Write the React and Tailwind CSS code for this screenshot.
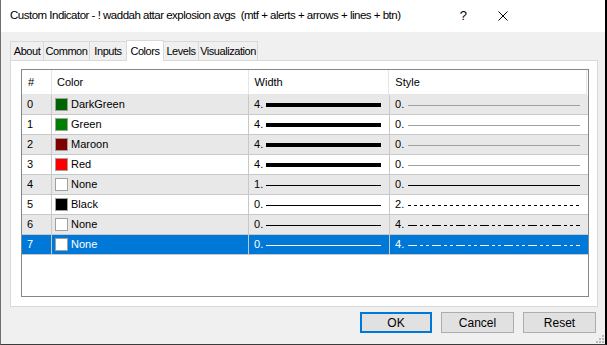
import React from 'react'

const rows = [
  { n: 0, color: '#006400', name: 'DarkGreen', w: 4, s: 0 },
  { n: 1, color: '#008000', name: 'Green', w: 4, s: 0 },
  { n: 2, color: '#800000', name: 'Maroon', w: 4, s: 0 },
  { n: 3, color: '#ff0000', name: 'Red', w: 4, s: 0 },
  { n: 4, color: '#ffffff', name: 'None', w: 1, s: 0 },
  { n: 5, color: '#000000', name: 'Black', w: 0, s: 2 },
  { n: 6, color: '#ffffff', name: 'None', w: 0, s: 4 },
  { n: 7, color: '#ffffff', name: 'None', w: 0, s: 4 },
]

const tabs = [
  { label: 'About', w: 'w-[34px]' },
  { label: 'Common', w: 'w-[46px]' },
  { label: 'Inputs', w: 'w-[36px]' },
  { label: 'Colors', w: 'w-[38px]', active: true },
  { label: 'Levels', w: 'w-[35px]' },
  { label: 'Visualization', w: 'w-[59px]' },
]

function WidthLine({ w, stroke }) {
  const thick = w === 4
  return (
    <svg width="116" height="6" className="block">
      <line x1="0" y1={thick ? 3 : 3.5} x2="115" y2={thick ? 3 : 3.5} stroke={stroke} strokeWidth={thick ? 4 : 1} />
    </svg>
  )
}

function StyleLine({ s, stroke }) {
  const dash = s === 2 ? '3 3' : s === 4 ? '9 3 3 3 3 3' : undefined
  return (
    <svg width="173" height="6" className="block">
      <line x1="0" y1="3.5" x2="172" y2="3.5" stroke={stroke} strokeWidth="1" strokeDasharray={dash} />
    </svg>
  )
}

export default function App() {
  return (
    <div
      className="w-[607px] h-[345px] bg-[#f0f0f0] border-l border-l-[#6e6e6e] border-r-2 border-r-black border-b border-b-[#3c3c3c] flex flex-col text-black overflow-hidden"
      style={{ fontFamily: '"Liberation Sans", Arial, sans-serif' }}
    >
      {/* Title bar */}
      <div className="h-[32px] bg-white flex items-center pl-[9px] text-[11.5px] tracking-[-0.5px] shrink-0">
        <span className="whitespace-pre shrink-0">Custom Indicator - ! waddah attar explosion avgs  (mtf + alerts + arrows + lines + btn)</span>
        <div className="flex-1" />
        <div className="w-[40px] text-center text-[13px] shrink-0">?</div>
        <div className="w-[40px] flex justify-center shrink-0">
          <svg width="10" height="10" className="block">
            <path d="M0.5 0.5 L9.5 9.5 M9.5 0.5 L0.5 9.5" stroke="#000" strokeWidth="1" />
          </svg>
        </div>
        <div className="w-[82px] shrink-0" />
      </div>

      {/* Tabs */}
      <div className="pl-[9px] pt-[7px] flex items-end h-[28px] shrink-0 text-[11px] tracking-[-0.45px]">
        {tabs.map((t, i) =>
          t.active ? (
            <div
              key={t.label}
              className={`${t.w} h-[21px] bg-white border-t border-x border-[#d9d9d9] flex items-start justify-center pt-[2px] -mb-px relative z-10 whitespace-nowrap`}
            >
              {t.label}
            </div>
          ) : (
            <div
              key={t.label}
              className={`${t.w} h-[19px] bg-[#f0f0f0] border-t border-[#d9d9d9] ${i === 0 ? 'border-l' : ''} ${tabs[i + 1] && !tabs[i + 1].active ? 'border-r' : ''} ${i === tabs.length - 1 ? 'border-r' : ''} flex items-center justify-center whitespace-nowrap`}
            >
              {t.label}
            </div>
          )
        )}
      </div>

      {/* Panel */}
      <div className="ml-[9px] mr-[7px] h-[247px] bg-white border border-[#d9d9d9] pl-[10px] pr-[8px] pt-[8px] pb-[9px] shrink-0">
        <div className="h-full border border-[#828790] bg-white text-[11px] pr-px">
          {/* Header */}
          <div className="flex h-[25px] border-b border-[#e5e5e5]">
            <div className="w-[30px] border-r border-[#e5e5e5] flex items-center pl-[6px]">#</div>
            <div className="w-[197px] border-r border-[#e5e5e5] flex items-center pl-[5px]">Color</div>
            <div className="w-[141px] border-r border-[#e5e5e5] flex items-center pl-[6px]">Width</div>
            <div className="w-[198px] border-r border-[#e5e5e5] flex items-center pl-[6px]">Style</div>
          </div>
          {rows.map((r) => {
            const sel = r.n === 7
            const bg = sel ? 'bg-[#0078d7] text-white' : r.n % 2 === 0 ? 'bg-[#e8e8e8]' : 'bg-white'
            const stroke = sel ? '#ffffff' : '#000000'
            const styleStroke = sel ? '#ffffff' : r.w === 4 ? '#a0a0a0' : '#000000'
            return (
              <div key={r.n} className={`flex h-[20px] border-b border-[#c8c8c8] w-[566px] ${bg}`}>
                <div className="w-[30px] border-r border-[#c8c8c8] flex items-center pl-[5px]">{r.n}</div>
                <div className="w-[197px] border-r border-[#c8c8c8] flex items-center pl-[3px]">
                  <span
                    className="w-[13px] h-[13px] border border-[#a0a0a0] mr-[3px] shrink-0"
                    style={{ backgroundColor: r.color }}
                  />
                  {r.name}
                </div>
                <div className="w-[141px] border-r border-[#c8c8c8] flex items-center pl-[5px]">
                  <span className="w-[12px]">{r.w}.</span>
                  <WidthLine w={r.w} stroke={stroke} />
                </div>
                <div className="w-[198px] flex items-center pl-[5px]">
                  <span className="w-[13px]">{r.s}.</span>
                  <StyleLine s={r.s} stroke={styleStroke} />
                </div>
              </div>
            )
          })}
        </div>
      </div>

      {/* Buttons */}
      <div className="flex-1 flex items-start justify-end pt-[5px] pr-[9px] gap-[9px] text-[12px] relative">
        <button className="w-[72px] h-[21px] bg-[#e1e1e1] border-2 border-[#0078d7] flex items-center justify-center">OK</button>
        <button className="w-[73px] h-[21px] bg-[#e1e1e1] border border-[#adadad] flex items-center justify-center">Cancel</button>
        <button className="w-[73px] h-[21px] bg-[#e1e1e1] border border-[#adadad] flex items-center justify-center">Reset</button>
        <svg width="11" height="11" className="absolute right-0 bottom-0">
          {[[8, 2], [8, 5], [5, 5], [8, 8], [5, 8], [2, 8]].map(([x, y]) => (
            <rect key={`${x}-${y}`} x={x} y={y} width="2" height="2" fill="#b8b8b8" />
          ))}
        </svg>
      </div>
    </div>
  )
}
